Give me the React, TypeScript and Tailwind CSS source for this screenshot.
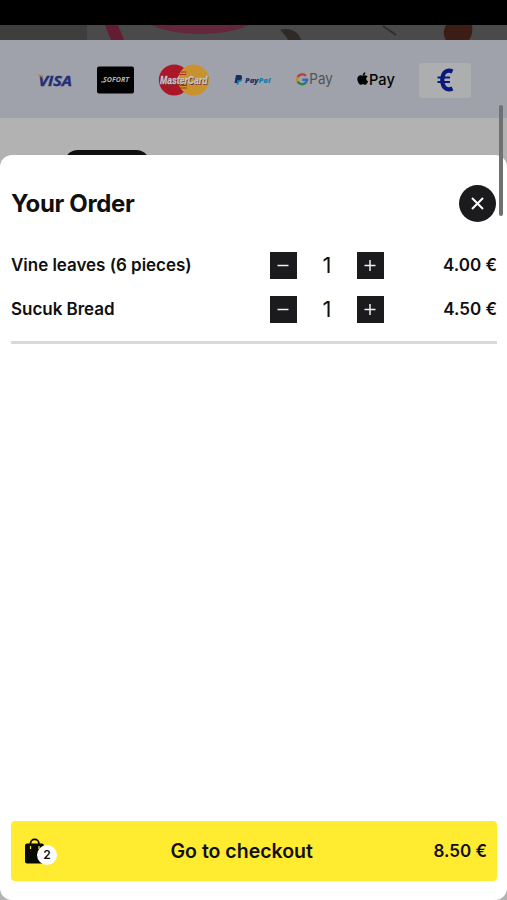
import type { ReactNode } from 'react'

const items = [
  { name: 'Vine leaves (6 pieces)', qty: 1, price: '4.00 €' },
  { name: 'Sucuk Bread', qty: 1, price: '4.50 €' },
]

function Visa() {
  return (
    <svg className="overflow-visible" width="35" height="18" viewBox="0 0 35 18">
      <text x="1.5" y="14.6" textLength="33.5" lengthAdjust="spacingAndGlyphs" fontFamily="Open Sans" fontSize="15" fontWeight="700" fontStyle="italic" fill="#242f76" stroke="#242f76" strokeWidth=".4">VISA</text>
      <path d="M0 3.400h4c.8 0 1.200.4 1.400 1.100l.8 4C4.800 6 3 4.700 0 4z" fill="#bd8443" />
    </svg>
  )
}

function Sofort() {
  return (
    <svg width="37" height="28" viewBox="0 0 37 28">
      <rect y=".5" width="37" height="27" rx="2" fill="#020203" />
      <text x="6" y="16.300" textLength="26" lengthAdjust="spacingAndGlyphs" fontFamily="Open Sans" fontSize="7.200" fontWeight="700" fontStyle="italic" fill="#b2b2b2">SOFORT</text>
      <path d="M4 16h4" stroke="#b2b2b2" />
    </svg>
  )
}

function MasterCard() {
  return (
    <svg className="overflow-visible" width="51" height="32" viewBox="0 0 51 32">
      <circle cx="16.200" cy="16" r="15.400" fill="#aa1728" />
      <circle cx="35.600" cy="16" r="15.400" fill="#c8932f" />
      <path d="M22.500 8h6M21.300 10.500h7M22 21.500h7M22.500 24h6.500" stroke="#ad3228" strokeWidth="1.100" />
      <text x="2.600" y="20.700" textLength="47.500" lengthAdjust="spacingAndGlyphs" fontFamily="Liberation Sans" fontSize="11" fontWeight="700" fontStyle="italic" fill="#6b2925">MasterCard</text>
      <text x="2" y="20" textLength="47.500" lengthAdjust="spacingAndGlyphs" fontFamily="Liberation Sans" fontSize="11" fontWeight="700" fontStyle="italic" fill="#c5c5c8" stroke="#c5c5c8" strokeWidth=".3">MasterCard</text>
    </svg>
  )
}

function PayPal() {
  return (
    <svg className="overflow-visible" width="37" height="12" viewBox="0 0 37 12">
      <path d="M3.500 3H7c1.400.6 1.500 2.200.8 3.400-.6 1-1.500 1.300-2.900 1.300l-.4 2.700H2.400z" fill="#1479ab" />
      <path d="M2 1h3.800c2 0 2.600 1.300 2 2.900-.6 1.700-1.800 2.200-3.600 2.200h-.8L2.800 9H.500z" fill="#192d63" />
      <text x="11" y="9.400" textLength="13.500" lengthAdjust="spacingAndGlyphs" fontFamily="Open Sans" fontSize="7" fontWeight="800" fontStyle="italic" fill="#1d3165">Pay</text>
      <text x="24.500" y="9.400" textLength="12" lengthAdjust="spacingAndGlyphs" fontFamily="Open Sans" fontSize="7" fontWeight="800" fontStyle="italic" fill="#1380ac">Pal</text>
    </svg>
  )
}

function GooglePay() {
  return (
    <svg className="overflow-visible" width="37" height="20" viewBox="0 0 37 20">
      <g transform="translate(.8 -.3)" fill="none" strokeWidth="2.400">
        <path d="M10.100 6.200A5.100 5.100 0 0 0 1.900 7.500" stroke="#bc3b32" />
        <path d="M1.900 7.300a5.100 5.100 0 0 0 0 5" stroke="#bd9118" />
        <path d="M1.900 12a5.100 5.100 0 0 0 7.800 1.200" stroke="#2c8146" />
        <path d="M9.300 13.500a4.700 4.700 0 0 0 1.900-3.500H6.500" stroke="#3369b5" />
      </g>
      <text x="14.300" y="14" textLength="23.500" lengthAdjust="spacingAndGlyphs" fontFamily="Inter" fontSize="14.800" fill="#505359">Pay</text>
    </svg>
  )
}

function ApplePay() {
  return (
    <svg className="overflow-visible" width="38" height="20" viewBox="0 0 38 20">
      <g transform="translate(.2 3) scale(.0285)">
        <path d="M318.700 205c-.2-36.700 16.400-64.400 50-84.800-18.800-26.900-47.200-41.700-84.700-44.600-35.500-2.800-74.300 20.700-88.500 20.700-15 0-49.400-19.700-76.400-19.700C63.300 77.500 4 121 4 209.500c0 26.200 4.800 53.300 14.400 81.200 12.800 36.700 59 126.700 107.200 125.200 25.200-.6 43-17.900 75.800-17.900 31.800 0 48.300 17.900 76.400 17.900 48.600-.7 90.400-82.500 102.600-119.300-65.200-30.700-61.700-90-61.700-91.600zM262.100 49c27.300-32.400 24.800-61.900 24-72.500-24.100 1.400-52 16.400-67.900 34.900-17.500 19.800-27.800 44.300-25.600 71.900 26.100 2 49.900-11.400 69.500-34.300z" fill="#020203" />
      </g>
      <text x="12" y="14.500" textLength="25.800" lengthAdjust="spacingAndGlyphs" fontFamily="Inter" fontSize="15" fontWeight="500" fill="#020203">Pay</text>
    </svg>
  )
}

function Payments() {
  return (
    <section className="flex h-[78px] items-center gap-[24.5px] bg-[#9fa2aa] pl-[37px] pt-[2px]">
      <Visa />
      <Sofort />
      <MasterCard />
      <PayPal />
      <GooglePay />
      <ApplePay />
      <div className="flex h-[35px] w-[52px] items-center justify-center rounded-[3px] bg-[#acaeb0]">
        <svg width="18" height="24" viewBox="0 0 18 24" fill="none" stroke="#08187c">
          <path d="M16.500 3.500C11 1 6.300 4 6.300 12s4.700 11 10.200 8.500" strokeWidth="4.200" />
          <path d="M1.500 9.500h12.500M1.500 14h12.500" strokeWidth="2.200" />
        </svg>
      </div>
    </section>
  )
}

function QtyButton({ label, children }: { label: string; children: ReactNode }) {
  return (
    <button aria-label={label} className="flex size-[27px] items-center justify-center bg-[#1b1b1d]">
      <svg width="13" height="13" viewBox="0 0 13 13" stroke="#efefef" strokeWidth="1.500">{children}</svg>
    </button>
  )
}

export default function App() {
  return (
    <div className="relative h-[900px] w-[507px] overflow-hidden bg-[#b2b2b2] font-[Inter,sans-serif] text-[#101011]">
      <div className="h-[25px] bg-black" />
      <svg className="block" width="507" height="15" viewBox="0 0 507 15">
        <rect width="507" height="15" fill="#4a4a4b" />
        <rect width="87" height="15" fill="#3e3e3d" />
        <path d="M105 0h13l6 15h-13z" fill="#641c31" />
        <path d="M151 0h98c-25 12-72 12-98 0z" fill="#64263a" />
        <path d="M280 5c7-3 19 0 21 10h-13c-2-4-5-7-8-10z" fill="#302a27" />
        <path d="m383 1 13 9" stroke="#302e2e" strokeWidth="2" />
        <path d="M446 0h26c1 6 0 11-3 15h-23c-3-5-3-9 0-15z" fill="#3b1d15" />
      </svg>
      <Payments />
      <div className="ml-[64px] mt-8 h-10 w-[86px] rounded-[14px] bg-[#101011]" />

      <section className="absolute inset-x-0 bottom-0 flex h-[745px] flex-col rounded-xl bg-white pb-[19px] pl-[11px] pr-[10px] pt-[30px]">
        <header className="flex h-[37px] items-center justify-between">
          <h1 className="pt-px text-[24px] font-bold tracking-[-0.35px]">Your Order</h1>
          <button aria-label="Close" className="mr-px flex size-[37px] items-center justify-center rounded-full bg-[#1b1b1d]">
            <svg width="13" height="13" viewBox="0 0 13 13" stroke="white" strokeWidth="2"><path d="m1 1 11 11M12 1 1 12" /></svg>
          </button>
        </header>

        <ul className="mt-[21px] border-b-[3px] border-[#d8d9dd] pb-[10px]">
          {items.map((item) => (
            <li key={item.name} className="flex h-11 items-center">
              <span className="w-[259px] pt-[2px] text-[17px] font-semibold tracking-[-0.03px]">{item.name}</span>
              <div className="flex w-[114px] items-center justify-between">
                <QtyButton label="Decrease"><path d="M.5 6.500h11" /></QtyButton>
                <span className="text-[22px]">{item.qty}</span>
                <QtyButton label="Increase"><path d="M.5 6.500h11M6 1v11" /></QtyButton>
              </div>
              <span className="ml-auto pt-[2px] text-[17px] font-semibold">{item.price}</span>
            </li>
          ))}
        </ul>

        <button className="mt-auto flex h-[60px] items-center rounded bg-[#ffec31] pl-[14px] pr-[10px]">
          <span className="relative">
            <svg width="19" height="26" viewBox="0 0 19 26">
              <path d="M5.500 7V5.500a4.200 4.200 0 0 1 8.400 0V7" fill="none" stroke="#080805" strokeWidth="1.800" />
              <rect y="5.500" width="19" height="20" rx="2" fill="#080805" />
              <path d="M5.500 8v3M14 8v3" stroke="#ffec31" strokeWidth="1.200" />
            </svg>
            <span className="absolute left-[12px] top-[7px] flex size-[20px] items-center justify-center rounded-full bg-white text-[12px] font-semibold">2</span>
          </span>
          <span className="ml-[126.500px] pt-[2px] text-[19.5px] font-semibold">Go to checkout</span>
          <span className="ml-auto pt-[2px] text-[17px] font-semibold">8.50 €</span>
        </button>
      </section>
      <div className="absolute left-[499px] top-[105px] h-[111px] w-1 rounded-full bg-[#707072]" />
    </div>
  )
}
